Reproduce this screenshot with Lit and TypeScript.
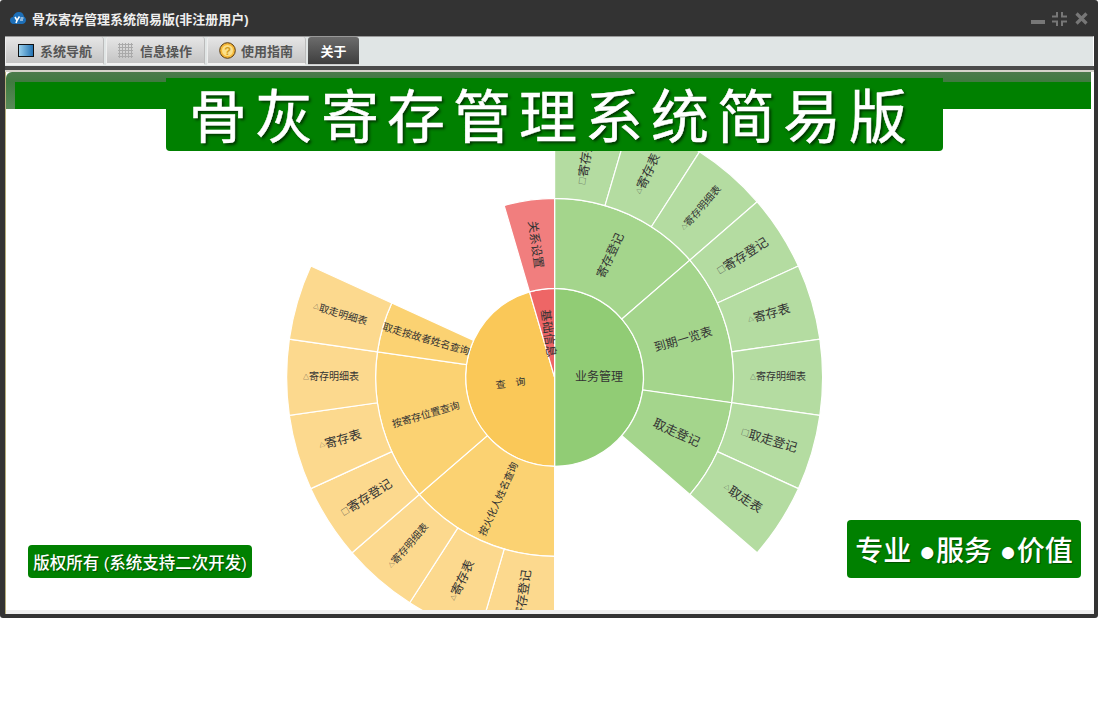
import { LitElement, html, css, svg } from "lit";
import { customElement } from "lit/decorators.js";

const CX = 548.6;
const CY = 268.3;
const U = 360 / 22;
const R = [0, 89, 179, 268];
const PAL = {
  g: ["#91cc75", "#a4d58c", "#b4dca1"],
  y: ["#fac858", "#fbd272", "#fcd98e"],
  r: ["#ee6666", "#f17e7e", "#f17e7e"],
};
type Seg = { t: string; p?: string; s: number; c: keyof typeof PAL; l: number; a: number; b: number };
const segs: Seg[] = [
  { t: "业务管理", s: 12, c: "g", l: 0, a: 0, b: 11 },
  { t: "查　询", s: 10, c: "y", l: 0, a: 11, b: 21 },
  { t: "基础信息", s: 12, c: "r", l: 0, a: 21, b: 22 },
  { t: "寄存登记", s: 12, c: "g", l: 1, a: 0, b: 3 },
  { t: "到期一览表", s: 12, c: "g", l: 1, a: 3, b: 6 },
  { t: "取走登记", s: 12.5, c: "g", l: 1, a: 6, b: 8 },
  { t: "按火化人姓名查询", s: 10, c: "y", l: 1, a: 11, b: 14 },
  { t: "按寄存位置查询", s: 10, c: "y", l: 1, a: 14, b: 17 },
  { t: "取走按故者姓名查询", s: 10, c: "y", l: 1, a: 17, b: 18 },
  { t: "关系设置", s: 12, c: "r", l: 1, a: 21, b: 22 },
  { t: "寄存登记", p: "□", s: 12.5, c: "g", l: 2, a: 0, b: 1 },
  { t: "寄存表", p: "△", s: 12.5, c: "g", l: 2, a: 1, b: 2 },
  { t: "寄存明细表", p: "△", s: 10, c: "g", l: 2, a: 2, b: 3 },
  { t: "寄存登记", p: "□", s: 12.5, c: "g", l: 2, a: 3, b: 4 },
  { t: "寄存表", p: "△", s: 12.5, c: "g", l: 2, a: 4, b: 5 },
  { t: "寄存明细表", p: "△", s: 10, c: "g", l: 2, a: 5, b: 6 },
  { t: "取走登记", p: "□", s: 12.5, c: "g", l: 2, a: 6, b: 7 },
  { t: "取走表", p: "△", s: 12.5, c: "g", l: 2, a: 7, b: 8 },
  { t: "寄存登记", p: "□", s: 12.5, c: "y", l: 2, a: 11, b: 12 },
  { t: "寄存表", p: "△", s: 12.5, c: "y", l: 2, a: 12, b: 13 },
  { t: "寄存明细表", p: "△", s: 10, c: "y", l: 2, a: 13, b: 14 },
  { t: "寄存登记", p: "□", s: 12.5, c: "y", l: 2, a: 14, b: 15 },
  { t: "寄存表", p: "△", s: 12.5, c: "y", l: 2, a: 15, b: 16 },
  { t: "寄存明细表", p: "△", s: 10, c: "y", l: 2, a: 16, b: 17 },
  { t: "取走明细表", p: "△", s: 10, c: "y", l: 2, a: 17, b: 18 },
];

const pt = (r: number, deg: number) => {
  const t = (deg * Math.PI) / 180;
  return [CX + r * Math.sin(t), CY - r * Math.cos(t)];
};
const f = (n: number) => n.toFixed(2);

function arcPath(s: Seg) {
  const r0 = R[s.l];
  const r1 = R[s.l + 1];
  const a0 = s.a * U;
  const a1 = s.b * U;
  const large = a1 - a0 > 180 ? 1 : 0;
  const [x0, y0] = pt(r1, a0);
  const [x1, y1] = pt(r1, a1);
  if (r0 === 0) return `M${CX} ${CY}L${f(x0)} ${f(y0)}A${r1} ${r1} 0 ${large} 1 ${f(x1)} ${f(y1)}Z`;
  const [x2, y2] = pt(r0, a1);
  const [x3, y3] = pt(r0, a0);
  return `M${f(x0)} ${f(y0)}A${r1} ${r1} 0 ${large} 1 ${f(x1)} ${f(y1)}L${f(x2)} ${f(y2)}A${r0} ${r0} 0 ${large} 0 ${f(x3)} ${f(y3)}Z`;
}

function label(s: Seg) {
  const mid = ((s.a + s.b) / 2) * U;
  const [x, y] = pt((R[s.l] + R[s.l + 1]) / 2, mid);
  const rot = mid > 180 ? mid - 270 : mid - 90;
  const markSize = s.p === "□" ? 8 : 6;
  return svg`<text class="lbl" font-size=${s.s} transform="translate(${f(x)} ${f(y)}) rotate(${f(rot)}) translate(0 -1.5)" text-anchor="middle" dominant-baseline="central">${s.p ? svg`<tspan font-size=${markSize} class="mark">${s.p}</tspan>` : ""}${s.t}</text>`;
}

@customElement("app-root")
export class AppRoot extends LitElement {
  static styles = css`
    :host { display: block; width: 1099px; height: 723px; background: #fff; font-family: "Noto Sans CJK SC", "Liberation Sans", sans-serif; }
    .win { width: 1098px; height: 618px; box-sizing: border-box; background: #333; border-radius: 3px; padding: 0 4px 4px 5px; display: flex; flex-direction: column; }
    .title { height: 36px; display: flex; align-items: center; color: #fff; font-size: 13px; font-weight: 700; flex: none; }
    .title .logo { margin: 0 6px 0 5px; width: 16px; height: 14px; }
    .title .name { flex: 1; color: #eee; font-family: "Liberation Sans", "Noto Sans CJK SC", sans-serif; }
    .ctrls { display: flex; align-items: center; gap: 7px; margin: 0 6px 0 0; padding-top: 1px; }
    .tabs { height: 30px; flex: none; box-sizing: border-box; background: #e0e5e5; border-top: 1px solid #999; border-right: 1px solid #fff; display: flex; gap: 2px; }
    .tab { width: 99px; height: 28px; box-sizing: border-box; background: linear-gradient(#e6e6e6, #c4c4c4); border-bottom: 2px solid #f2f2f2; border-radius: 3px 3px 0 0; border-left: 1px solid #eee; border-right: 1px solid #bbb; display: flex; align-items: center; font-size: 13px; font-weight: 700; color: #555; padding-left: 12px; gap: 6px; }
    .tab.grid { padding-left: 11px; }
    .tab.help { padding-left: 11px; gap: 5px; }
    .tab.on { width: 51px; justify-content: center; padding: 0; background: linear-gradient(#6c6c6c, #3e3e3e); color: #fff; border: none; border-bottom: 1px solid #ccc; }
    .tab svg { flex: none; }
    .sep { height: 4px; background: #4a4a4a; flex: none; }
    .sep2 { height: 2px; background: #d6d3cb; flex: none; }
    .panel { position: relative; flex: 1; min-height: 0; display: flex; flex-direction: column; background: #fff; border-left: 1px solid #b5ae7c; }
    .head { flex: none; height: 37px; box-sizing: border-box; margin-right: 3px; padding: 10px 0 0 9px; background: linear-gradient(#4c7a4c 0, #3f7a3f 10px, #5a8a5a 37px); border-radius: 6px 0 0 0; display: flex; }
    .head i { flex: 1; background: #008000; display: block; }
    .chart { flex: 1; min-height: 0; overflow: hidden; }
    .chart sun-burst { display: block; }
    .foot { height: 4px; background: #eee; flex: none; }
    .banner { position: absolute; left: 160px; top: 6px; width: 777px; height: 73px; box-sizing: border-box; padding: 0 5px 3px 0; background: #008000; border-radius: 0 0 4px 4px; display: flex; align-items: center; justify-content: center; color: #fff; font-size: 58px; font-weight: 400; -webkit-text-stroke: 0.5px #fff; letter-spacing: 8px; text-shadow: 2px 2px 3px #003000; white-space: nowrap; }
    .badge { position: absolute; background: #008000; border-radius: 4px; color: #fff; display: flex; align-items: center; justify-content: center; white-space: nowrap; text-shadow: 1px 1px 1px rgba(0,0,0,.4); font-family: "Liberation Sans", "Noto Sans CJK SC", sans-serif; }
    .copy { left: 22px; top: 473px; width: 224px; height: 33px; font-size: 16.500px; font-weight: 500; }
    .slogan { left: 841px; top: 448px; width: 234px; height: 58px; font-size: 28px; font-weight: 500; }
  `;

  render() {
    return html`
      <div class="win">
        <div class="title">
          <svg class="logo" viewBox="0 0 16 14"><path d="M4 13C1 13 0 11 0 9C0 7 1.500 6 3 6C3.500 3 6 1 9 1C12 1 13.500 3 14 5.500C15.500 6.500 16 8 16 9C16 11.500 14 13 12 13Z" fill="#1d6fb8"/><path d="M5 6L7 9.500L9.500 5.500M7 9.500L6 12" stroke="#fff" stroke-width="1.600" fill="none"/><path d="M10 9H13M10.500 7H13.500" stroke="#fff" stroke-width="1"/></svg>
          <span class="name">骨灰寄存管理系统简易版(非注册用户)</span>
          <div class="ctrls">
            <svg width="14" height="14" viewBox="0 0 14 14"><rect x="0" y="8" width="14" height="4" fill="#777"/></svg>
            <svg width="15" height="14" viewBox="0 0 15 14"><path d="M5 0V4.500H0M10 0V4.500H15M5 14V9.500H0M10 14V9.500H15" fill="none" stroke="#777" stroke-width="2"/></svg>
            <svg width="13" height="13" viewBox="0 0 13 13" style="margin-left:1px"><path d="M1.500 1.500L11.500 11.500M11.500 1.500L1.500 11.500" stroke="#777" stroke-width="3.200"/></svg>
          </div>
        </div>
        <div class="tabs">
          <div class="tab">
            <svg width="16" height="13" viewBox="0 0 16 13"><defs><linearGradient id="mon" x1="0" x2="1"><stop offset="0" stop-color="#9cd2ee"/><stop offset="1" stop-color="#1f6fb0"/></linearGradient></defs><rect x=".5" y=".5" width="15" height="12" fill="url(#mon)" stroke="#111"/></svg>
            <span>系统导航</span>
          </div>
          <div class="tab grid">
            <svg width="15" height="15" viewBox="0 0 15 15" style="margin-right:1px"><path d="M1.500 0V15M4.500 0V15M7.500 0V15M10.500 0V15M13.500 0V15M0 1.500H15M0 4.500H15M0 7.500H15M0 10.500H15M0 13.500H15" stroke="#aaa" stroke-width="1" fill="none"/></svg>
            <span>信息操作</span>
          </div>
          <div class="tab help">
            <svg width="17" height="17" viewBox="0 0 17 17"><circle cx="8.500" cy="8.500" r="7.800" fill="#f5b93a" stroke="#5a3a10"/><circle cx="8.500" cy="8.500" r="5.500" fill="#fbe08a"/><text x="8.500" y="12.500" font-size="11" font-weight="700" text-anchor="middle" fill="#d09a20" font-family="Liberation Sans">?</text></svg>
            <span>使用指南</span>
          </div>
          <div class="tab on">关于</div>
        </div>
        <div class="sep"></div>
        <div class="sep2"></div>
        <div class="panel">
          <div class="head"><i></i></div>
          <div class="chart"><sun-burst></sun-burst></div>
          <div class="foot"></div>
          <div class="banner">骨灰寄存管理系统简易版</div>
          <div class="badge copy">版权所有 (系统支持二次开发)</div>
          <div class="badge slogan">专业 ●服务 ●价值</div>
        </div>
      </div>
    `;
  }
}

@customElement("sun-burst")
export class SunBurst extends LitElement {
  static styles = css`
    :host { display: block; }
    svg { display: block; }
    .lbl { fill: #333; font-family: "Noto Sans CJK SC", sans-serif; }
    .mark { fill: #444; }
  `;
  render() {
    return html`<svg width="1088" height="501" viewBox="0 0 1088 501">
      ${segs.map((s) => svg`<path d=${arcPath(s)} fill=${PAL[s.c][s.l]} stroke="#fff" stroke-width="1.200"></path>`)}
      ${segs.map(label)}
    </svg>`;
  }
}
